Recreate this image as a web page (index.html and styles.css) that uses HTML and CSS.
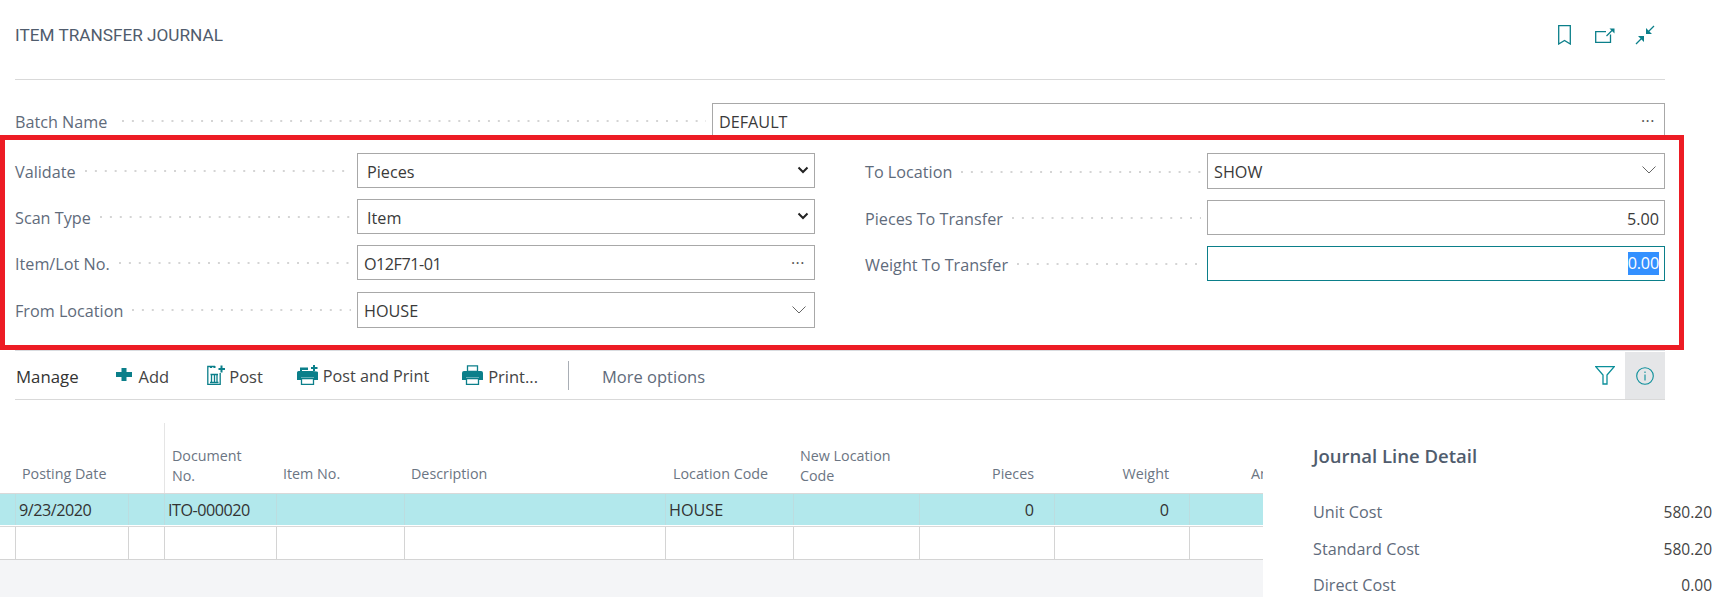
FILE: index.html
```html
<!DOCTYPE html>
<html lang="en">
<head>
<meta charset="utf-8">
<title>Item Transfer Journal</title>
<link rel="stylesheet" href="styles.css">
</head>
<body>
<div class="page">
  <header class="head">
    <h1 class="title">ITEM TRANSFER JOURNAL</h1>
    <div class="head-icons">
      <svg class="ic-book" viewBox="0 0 13 20"><path d="M.7.7h11.600v18.300L6.500 15.500.7 19z"/></svg>
      <svg class="ic-open" viewBox="0 0 20 15"><path d="M15.500 6.500V14.300H.7V3.700H11"/><path d="M11.500 8 17.500 2"/><path class="head-fill" d="M14.500 .5H19.500V5.500z"/></svg>
      <svg class="ic-collapse" viewBox="0 0 20 20"><path d="M1 19 7.500 12.500M13 7 19 1"/><path class="head-fill" d="M3 11H9V17zM11 3V9H17z"/></svg>
    </div>
  </header>

  <div class="batch">
    <span class="label">Batch Name</span><span class="dots"></span>
    <div class="field batch-field"><span>DEFAULT</span><span class="more">···</span></div>
  </div>

  <section class="form">
    <div class="col">
      <div class="row"><span class="label">Validate</span><span class="dots"></span><div class="field sel"><span>Pieces</span><svg class="chev-bold" viewBox="0 0 12 8"><path d="M1.500 1.500 6 6l4.500-4.500"/></svg></div></div>
      <div class="row"><span class="label">Scan Type</span><span class="dots"></span><div class="field sel"><span>Item</span><svg class="chev-bold" viewBox="0 0 12 8"><path d="M1.500 1.500 6 6l4.500-4.500"/></svg></div></div>
      <div class="row"><span class="label">Item/Lot No.</span><span class="dots"></span><div class="field"><span class="digits">O12F71-01</span><span class="more">···</span></div></div>
      <div class="row"><span class="label">From Location</span><span class="dots"></span><div class="field tall"><span>HOUSE</span><svg class="chev" viewBox="0 0 14 8"><path d="M.5.5 7 7l6.500-6.500"/></svg></div></div>
    </div>
    <div class="col">
      <div class="row"><span class="label lift">To Location</span><span class="dots"></span><div class="field tall lift"><span>SHOW</span><svg class="chev" viewBox="0 0 14 8"><path d="M.5.5 7 7l6.500-6.500"/></svg></div></div>
      <div class="row"><span class="label">Pieces To Transfer</span><span class="dots"></span><div class="field num"><span>5.00</span></div></div>
      <div class="row"><span class="label">Weight To Transfer</span><span class="dots"></span><div class="field num active"><span class="selected">0.00</span></div></div>
    </div>
  </section>

  <nav class="bar">
    <span class="manage">Manage</span>
    <span class="act act-add"><svg class="ic-add" viewBox="0 0 16 13"><path d="M5.500 0h5v4H16v5h-5.500v4h-5V9H0V4h5.500z"/></svg>Add</span>
    <span class="act act-post"><svg class="ic-post" viewBox="0 0 18 20"><path class="ln" d="M8 1.500H.8v18h12.400V8"/><path class="ln" d="M3.500 9.500h7.500M4.500 10v7.500M7.500 10v7.500M10 10v7.500M3 17.500h8.500"/><path class="fl" d="M3 1h2v2H3zM6.500 1h2v2h-2zM11.500 3h2V.5h2V3H18v2h-2.500v2.500h-2V5h-2z"/></svg>Post</span>
    <span class="act act-pp"><svg class="ic-print" viewBox="0 0 21 20"><path class="fl" d="M0 7.500Q0 6 1.500 6H3V2.500h8V5H5v1h10.500q5.500 0 5.500 1.500V15h-4v-2.500H4V15H0z"/><path class="ln" d="M4.500 13.500h12v6h-12z"/><path class="fl" d="M14 2h2V0h2v2h2.500v2H18v2h-2V4h-2z"/></svg>Post and Print</span>
    <span class="act act-print"><svg class="ic-print" viewBox="0 0 21 20"><path class="ln" d="M5.500 .8h10V6.500h-10z"/><path class="fl" d="M0 8q0-2 2-2h17q2 0 2 2v7h-4v-2.500H4V15H0z"/><path class="ln" d="M4.500 13.500h12v6h-12z"/></svg>Print...</span>
    <span class="sep"></span>
    <span class="more-opt">More options</span>
    <span class="bar-right">
      <svg class="ic-filter" viewBox="0 0 20 19"><path d="M.8.7h18.400L12 9v9H8V9z"/></svg>
      <span class="info"><svg class="ic-info" viewBox="0 0 18 18"><circle cx="9" cy="9" r="8.300"/><path d="M9 7.500v6M9 4.500v1.500"/></svg></span>
    </span>
  </nav>

  <main class="lower">
    <div class="grid-wrap">
      <div class="thead">
        <div class="th c-date">Posting Date</div>
        <div class="th c-gap"></div>
        <div class="th c-doc two">Document<br>No.</div>
        <div class="th c-item">Item No.</div>
        <div class="th c-desc">Description</div>
        <div class="th c-loc">Location Code</div>
        <div class="th c-new two">New Location<br>Code</div>
        <div class="th c-pcs r">Pieces</div>
        <div class="th c-wgt r">Weight</div>
        <div class="th c-amt">Amount</div>
      </div>
      <div class="tr sel-row">
        <div class="td c-date"><span class="digits">9/23/2020</span></div>
        <div class="td c-gap"></div>
        <div class="td c-doc"><span class="digits">ITO-000020</span></div>
        <div class="td c-item"></div>
        <div class="td c-desc"></div>
        <div class="td c-loc">HOUSE</div>
        <div class="td c-new"></div>
        <div class="td c-pcs r">0</div>
        <div class="td c-wgt r">0</div>
        <div class="td c-amt"></div>
      </div>
      <div class="tr empty-row">
        <div class="td c-date"></div>
        <div class="td c-gap"></div>
        <div class="td c-doc"></div>
        <div class="td c-item"></div>
        <div class="td c-desc"></div>
        <div class="td c-loc"></div>
        <div class="td c-new"></div>
        <div class="td c-pcs"></div>
        <div class="td c-wgt"></div>
        <div class="td c-amt"></div>
      </div>
      <div class="grid-fill"></div>
    </div>
    <aside class="detail">
      <h2 class="detail-title">Journal Line Detail</h2>
      <div class="kv"><span>Unit Cost</span><b>580.20</b></div>
      <div class="kv"><span>Standard Cost</span><b>580.20</b></div>
      <div class="kv"><span>Direct Cost</span><b>0.00</b></div>
    </aside>
  </main>

  <div class="highlight"></div>
</div>
</body>
</html>
```

FILE: styles.css
```css
* { box-sizing: border-box; }
html, body { margin: 0; padding: 0; background: #fff; }
body { font-family: "Open Sans", "Noto Sans", sans-serif; font-size: 16.200px; color: #333; }
.page { position: relative; width: 1734px; height: 597px; overflow: hidden; }
.digits { letter-spacing: -.5px; }

.head { display: flex; justify-content: space-between; align-items: center; height: 80px; margin: 0 69px 0 15px; border-bottom: 1px solid #d9d9d9; padding-bottom: 9px; }
.title { margin: 0; font-family: "Roboto", sans-serif; font-weight: 400; font-size: 17.200px; color: #505c6d; }
.head-icons { display: flex; align-items: center; margin-right: 10px; }
.head-icons svg { fill: none; stroke: #0b7f8a; stroke-width: 1.300; display: block; }
.head-icons .head-fill { fill: #0b7f8a; stroke: none; }
.ic-book { width: 13px; height: 20px; }
.ic-open { width: 20px; height: 15px; margin-left: 24px; }
.ic-collapse { width: 20px; height: 20px; margin-left: 20px; }

.label { color: #5f6b7b; white-space: nowrap; padding-top: 3px; }
.label.lift { padding-top: 1px; }
.dots { flex: 1; height: 2px; margin: 1px 6px 0 9px; background-image: radial-gradient(circle at 1px 1px, #d4d4d4 1px, transparent 1.200px); background-size: 9.900px 2px; background-repeat: repeat-x; }
.batch .dots { margin-left: 15px; }

.batch { display: flex; align-items: center; height: 35px; margin: 23px 69px 0 15px; }
.batch .batch-field { width: 953px; height: 35px; }

.field { display: flex; justify-content: space-between; align-items: center; width: 458px; flex: none; height: 35px; border: 1px solid #a8a8a8; padding: 3px 6px 0; color: #3a3a3a; background: #fff; }
.tall { height: 36px; }
.field.lift { padding-top: 1px; }
.more { color: #555; font-size: 16px; letter-spacing: .5px; line-height: 1; margin: -3px 3px 0 0; }
.sel { padding-left: 9px; padding-right: 5px; }
.num { justify-content: flex-end; padding-right: 5px; }
.active { border-color: #0b7f8a; }
.selected { background: #3390ff; color: #fff; line-height: 23px; letter-spacing: -.2px; margin-top: -3px; }
.chev-bold { width: 12px; height: 8px; fill: none; stroke: #222; stroke-width: 2; margin-top: -4px; }
.chev { width: 14px; height: 8px; fill: none; stroke: #666; stroke-width: 1; margin: -3px 2px 0 0; }

.form { display: grid; grid-template-columns: 800px 800px; column-gap: 50px; margin: 15px 0 0 15px; height: 175px; }
.col { display: flex; flex-direction: column; gap: 11.200px; }
.row { display: flex; align-items: center; }

.bar { display: flex; align-items: center; height: 50px; margin: 22px 69px 0 15px; padding-top: 2px; border-top: 1px solid #d9dce0; border-bottom: 1px solid #d9d9d9; font-size: 16.500px; }
.manage { color: #333; margin-left: 1px; font-size: 16.800px; }
.act { display: flex; align-items: center; color: #444; white-space: nowrap; }
.act svg { flex: none; display: block; margin-top: -2px; }
.act-add { margin-left: 37px; }
.act-post { margin-left: 38px; }
.act-pp { margin-left: 34px; font-size: 16.200px; }
.act-print { margin-left: 33px; }
.act .ic-add { width: 16px; height: 13px; fill: #0b7f8a; margin: -4px 7px 0 0; }
.act .ic-post { width: 18px; height: 20px; margin-right: 4px; }
.act .ic-print { width: 21px; height: 20px; margin-right: 5px; }
.ln { fill: none; stroke: #0b7f8a; stroke-width: 1.300; }
.fl { fill: #0b7f8a; }
.sep { width: 1px; height: 29px; background: #a9aeb5; margin: -2px 0 0 29.500px; }
.more-opt { color: #5f6b7b; margin-left: 33.500px; }
.bar-right { display: flex; align-items: center; margin: -2px 0 0 auto; height: 48px; }
.ic-filter { width: 20px; height: 19px; fill: none; stroke: #0b8f9a; stroke-width: 1.300; margin-right: 10px; }
.info { display: flex; align-items: center; justify-content: center; width: 40px; height: 47px; margin-top: 1px; background: #e5e6e8; }
.ic-info { width: 18px; height: 18px; fill: none; stroke: #0b8f9a; stroke-width: 1.100; }

.lower { display: flex; height: 198px; }
.grid-wrap { width: 1263px; flex: none; display: flex; flex-direction: column; overflow: hidden; height: 198px; }
.thead { display: flex; height: 94px; border-bottom: 1px solid #d9d9d9; flex: none; align-items: stretch; }
.tr { display: flex; flex: none; }
.th { display: flex; align-items: flex-end; padding-bottom: 9px; font-size: 14.300px; line-height: 20px; color: #6b7583; flex: none; white-space: nowrap; }
.th.two { padding-bottom: 7px; }
.c-date { width: 128px; padding-left: 22px; }
.c-gap { width: 36px; }
.c-doc { width: 112px; padding-left: 7px; }
.c-item { width: 128px; padding-left: 7px; }
.c-desc { width: 261px; padding-left: 7px; }
.c-loc { width: 128px; padding-left: 8px; }
.c-new { width: 126px; padding-left: 7px; }
.c-pcs { width: 135px; }
.c-wgt { width: 135px; }
.c-amt { width: 74px; padding-left: 62px; overflow: hidden; }
.th.r, .td.r { justify-content: flex-end; padding-right: 20px; }
.th.c-doc { border-left: 1px solid #e5e5e5; margin-top: 23px; }
.td { display: flex; align-items: center; flex: none; height: 100%; border-left: 1px solid #d4d4d4; color: #333; }
.sel-row { height: 31px; background: #b2e8ec; }
.sel-row .td { border-left-color: #bcdde0; }
.empty-row { height: 34px; margin-top: 1px; border-top: 1px solid #d9d9d9; border-bottom: 1px solid #d4d4d4; }
.td.c-date { padding-left: 3px; margin-left: 15px; width: 113px; }
.sel-row .td.c-doc { padding-left: 3px; }
.sel-row .td.c-loc { padding-left: 3px; }
.grid-fill { flex: 1; background: #f4f5f7; }

.detail { flex: 1; padding: 0 22px 0 50px; }
.detail-title { margin: 44px 0 0; font-size: 18.500px; font-weight: 600; line-height: 24px; color: #505c6d; }
.kv { display: flex; justify-content: space-between; line-height: 36.500px; color: #5f6b7b; }
.detail-title + .kv { margin-top: 26px; }
.kv b { font-weight: 400; color: #444; font-size: 15.500px; }

.highlight { position: absolute; left: 0; top: 135px; width: 1684px; height: 215px; border: 5px solid #ed1c24; pointer-events: none; }
```
